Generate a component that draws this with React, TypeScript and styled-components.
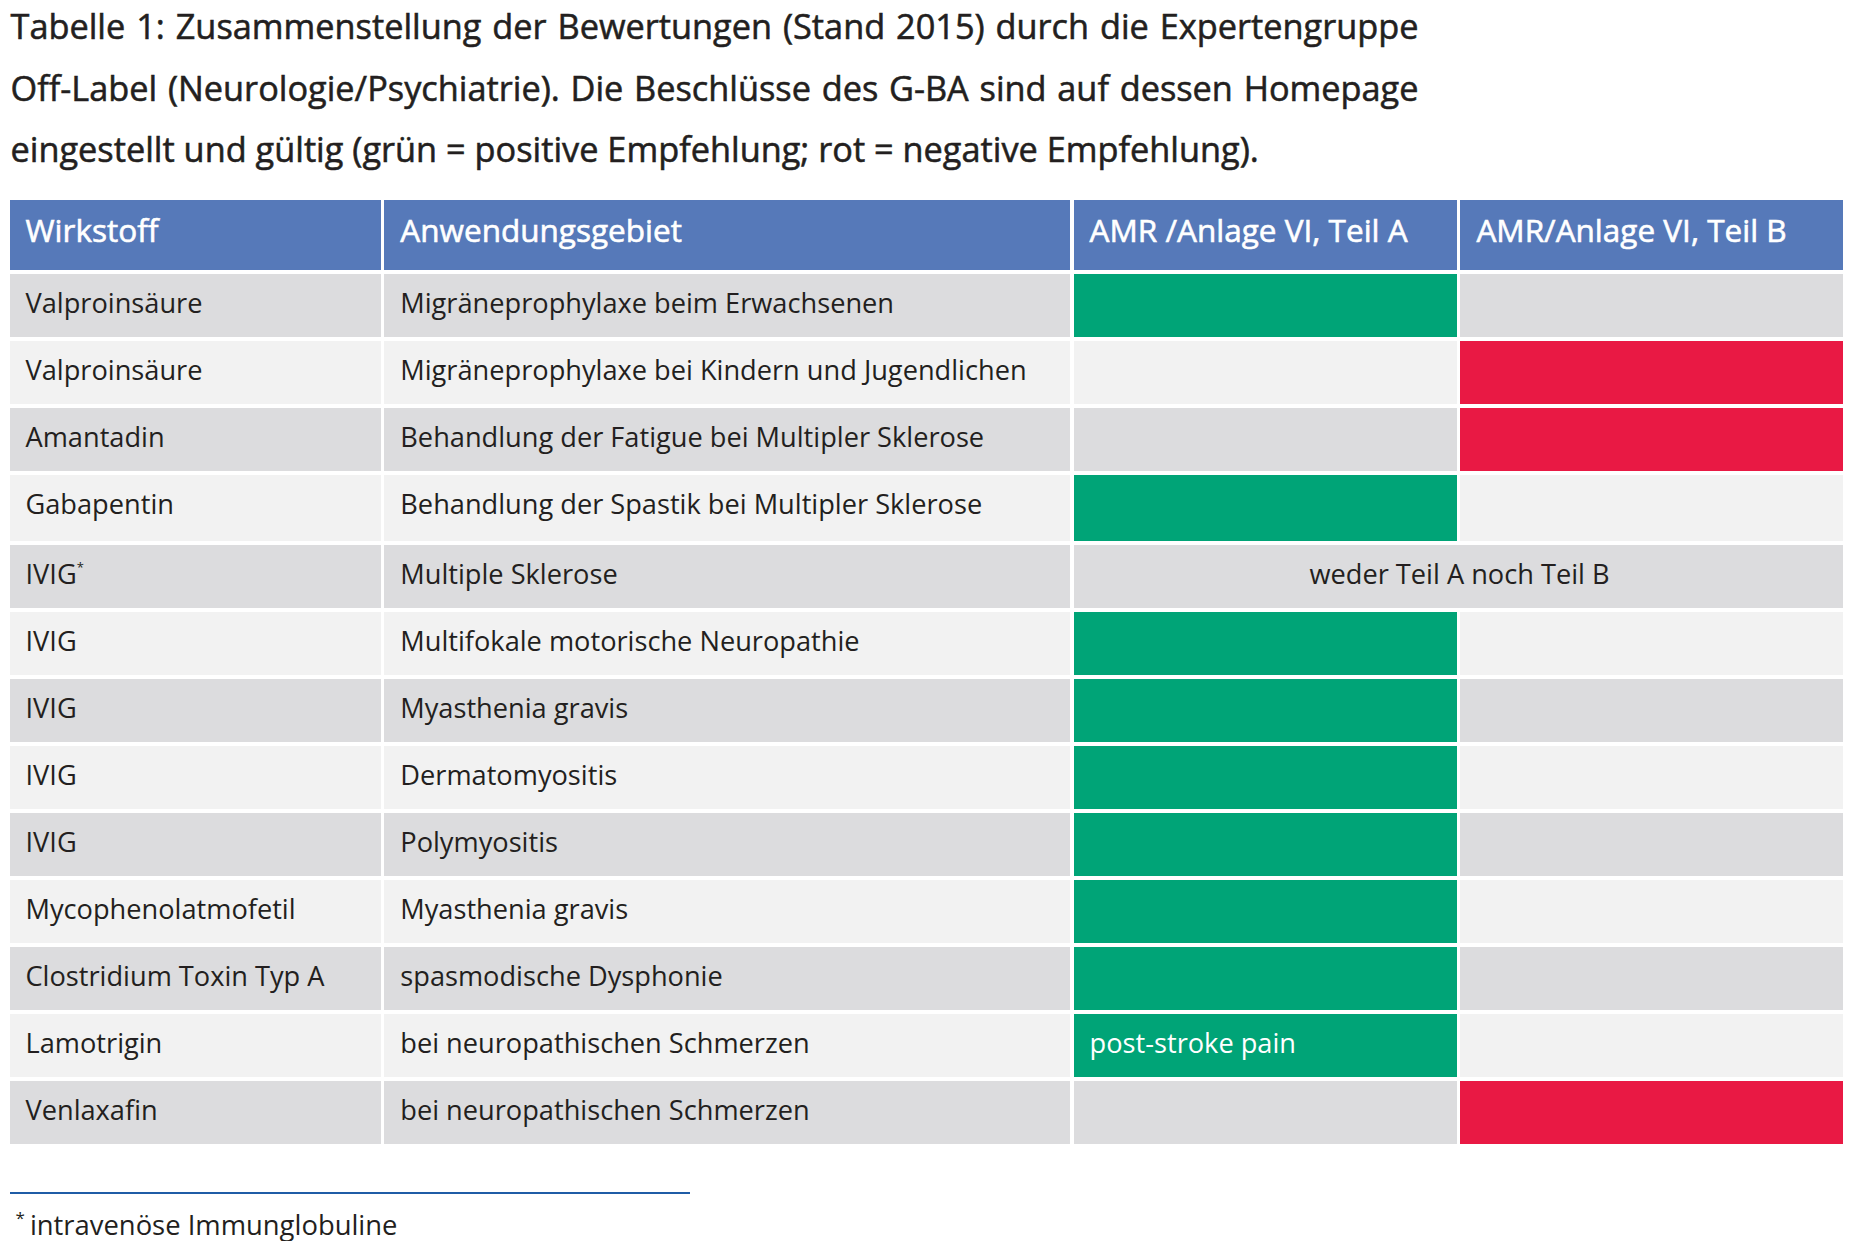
import React from "react";
import styled, { createGlobalStyle } from "styled-components";

const GlobalStyle = createGlobalStyle`
  html, body { margin: 0; padding: 0; background: #ffffff; }
  body { font-family: "Open Sans", "Noto Sans", "Liberation Sans", sans-serif; color: #231f20; }
`;

const Page = styled.div`
  width: 1853px;
  padding: 0 9px 0 9.5px;
  box-sizing: border-box;
`;

const Title = styled.div`
  margin: -5px 0 0 1px;
  width: 1408px;
  font-size: 34.3px;
  line-height: 61.5px;
  font-weight: 400;
  -webkit-text-stroke: 0.55px #231f20;
  color: #231f20;
`;

const TitleLine = styled.span<{ $justify?: boolean }>`
  display: block;
  white-space: nowrap;
  text-align: ${(p) => (p.$justify ? "justify" : "left")};
  text-align-last: ${(p) => (p.$justify ? "justify" : "left")};
`;

const Grid = styled.div`
  margin-top: 20px;
  display: grid;
  grid-template-columns: 371px 685.5px 383px 383px;
  grid-template-rows: 70px 63px 63px 63px 66.5px repeat(9, 63px);
  column-gap: 3.8px;
  row-gap: 4px;
`;

type Tone = "head" | "dark" | "light" | "green" | "red";

const toneBg: Record<Tone, string> = {
  head: "#5679b9",
  dark: "#dcdcde",
  light: "#f2f2f2",
  green: "#00a477",
  red: "#e91944",
};

const Cell = styled.div<{ $tone: Tone; $span?: number; $center?: boolean }>`
  background: ${(p) => toneBg[p.$tone]};
  grid-column: ${(p) => (p.$span ? `span ${p.$span}` : "auto")};
  text-align: ${(p) => (p.$center ? "center" : "left")};
  padding: 12px 14px 0 16px;
  box-sizing: border-box;
  font-size: 27.2px;
  line-height: 33px;
  color: ${(p) => (p.$tone === "green" || p.$tone === "red" ? "#ffffff" : "#231f20")};
  white-space: nowrap;
`;

const HeadCell = styled(Cell)`
  padding-top: 11px;
  font-size: 31.5px;
  line-height: 38px;
  font-weight: 400;
  -webkit-text-stroke: 0.6px #ffffff;
  color: #ffffff;
`;

const Sup = styled.span`
  font-size: 13px;
  vertical-align: top;
  line-height: 20px;
`;

const Rule = styled.hr`
  margin: 48px 0 0 0;
  width: 680px;
  border: none;
  border-top: 2px solid #1f5ca6;
`;

const Footnote = styled.p`
  margin: 15px 0 0 6px;
  font-size: 27.4px;
  line-height: 32px;
  color: #231f20;
`;

const FootSup = styled.span`
  font-size: 17px;
  vertical-align: top;
  line-height: 18px;
  margin-right: 5px;
`;

type Row = {
  drug: string;
  star?: boolean;
  area: string;
  a: Tone;
  b: Tone;
  aText?: string;
  span?: string;
};

const rows: Row[] = [
  { drug: "Valproinsäure", area: "Migräneprophylaxe beim Erwachsenen", a: "green", b: "dark" },
  { drug: "Valproinsäure", area: "Migräneprophylaxe bei Kindern und Jugendlichen", a: "light", b: "red" },
  { drug: "Amantadin", area: "Behandlung der Fatigue bei Multipler Sklerose", a: "dark", b: "red" },
  { drug: "Gabapentin", area: "Behandlung der Spastik bei Multipler Sklerose", a: "green", b: "light" },
  { drug: "IVIG", star: true, area: "Multiple Sklerose", a: "dark", b: "dark", span: "weder Teil A noch Teil B" },
  { drug: "IVIG", area: "Multifokale motorische Neuropathie", a: "green", b: "light" },
  { drug: "IVIG", area: "Myasthenia gravis", a: "green", b: "dark" },
  { drug: "IVIG", area: "Dermatomyositis", a: "green", b: "light" },
  { drug: "IVIG", area: "Polymyositis", a: "green", b: "dark" },
  { drug: "Mycophenolatmofetil", area: "Myasthenia gravis", a: "green", b: "light" },
  { drug: "Clostridium Toxin Typ A", area: "spasmodische Dysphonie", a: "green", b: "dark" },
  { drug: "Lamotrigin", area: "bei neuropathischen Schmerzen", a: "green", b: "light", aText: "post-stroke pain" },
  { drug: "Venlaxafin", area: "bei neuropathischen Schmerzen", a: "dark", b: "red" },
];

export default function App() {
  return (
    <>
      <GlobalStyle />
      <Page>
        <Title>
          <TitleLine $justify>
            Tabelle 1: Zusammenstellung der Bewertungen (Stand 2015) durch die Expertengruppe
          </TitleLine>
          <TitleLine $justify>
            Off-Label (Neurologie/Psychiatrie). Die Beschlüsse des G-BA sind auf dessen Homepage
          </TitleLine>
          <TitleLine>
            eingestellt und gültig (grün = positive Empfehlung; rot = negative Empfehlung).
          </TitleLine>
        </Title>
        <Grid>
          <HeadCell $tone="head">Wirkstoff</HeadCell>
          <HeadCell $tone="head">Anwendungsgebiet</HeadCell>
          <HeadCell $tone="head">AMR /Anlage VI, Teil A</HeadCell>
          <HeadCell $tone="head">AMR/Anlage VI, Teil B</HeadCell>
          {rows.map((r, i) => {
            const tone: Tone = i % 2 === 0 ? "dark" : "light";
            return (
              <React.Fragment key={i}>
                <Cell $tone={tone}>
                  {r.drug}
                  {r.star && <Sup>*</Sup>}
                </Cell>
                <Cell $tone={tone}>{r.area}</Cell>
                {r.span ? (
                  <Cell $tone={tone} $span={2} $center>
                    {r.span}
                  </Cell>
                ) : (
                  <>
                    <Cell $tone={r.a}>{r.aText ?? ""}</Cell>
                    <Cell $tone={r.b} />
                  </>
                )}
              </React.Fragment>
            );
          })}
        </Grid>
        <Rule />
        <Footnote>
          <FootSup>*</FootSup>intravenöse Immunglobuline
        </Footnote>
      </Page>
    </>
  );
}
